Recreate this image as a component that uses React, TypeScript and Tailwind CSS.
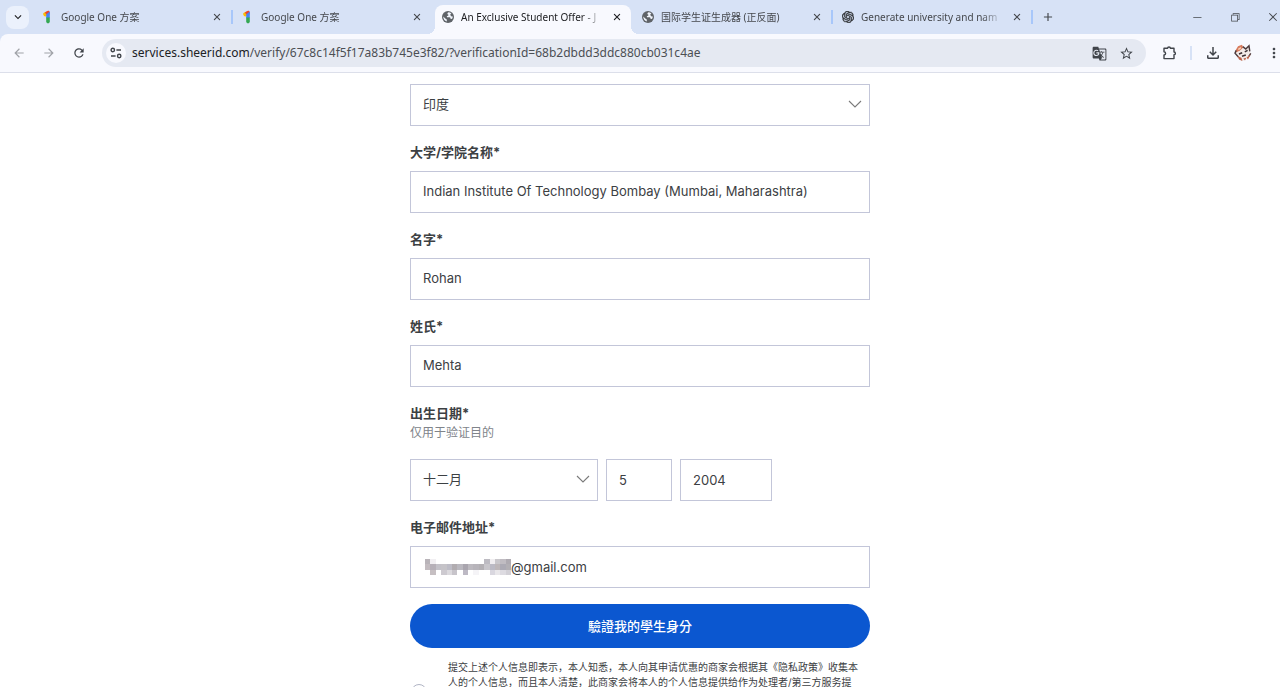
import React from "react"
import { IoClose } from "react-icons/io5"
import { MdArrowBack, MdArrowForward, MdRefresh, MdKeyboardArrowDown, MdStarBorder, MdMoreVert, MdAdd, MdOutlineFileDownload, MdGTranslate } from "react-icons/md"
import { SiOpenai } from "react-icons/si"
import { VscChromeMinimize, VscChromeRestore, VscChromeClose } from "react-icons/vsc"

interface Tab {
    title: string
    icon: "one" | "globe" | "openai"
    active?: boolean
    divider?: boolean
}

const TABS: Array<Tab> = [
    { title: "Google One 方案", icon: "one", divider: true },
    { title: "Google One 方案", icon: "one" },
    { title: "An Exclusive Student Offer - J", icon: "globe", active: true },
    { title: "国际学生证生成器 (正反面)", icon: "globe", divider: true },
    { title: "Generate university and nam", icon: "openai", divider: true },
]

// blurred part of the address, one row of colours per line of blocks
const MOSAIC = [
    ["#b9b4b9", "#f1eff2", "", "", "", "", "", "", "", "", "", "#bdbbc2", "#f0eef0", "#c9c7cb", "#c0bcc2", "#aeaab1"],
    ["#c3bcc0", "#b6b0b8", "#c3c1c8", "#c5c3c8", "#bdbcc6", "#b1acb0", "#bab8bf", "#a9a5ae", "#bcb9bf", "#b7b4ba", "#b3b0b4", "#c8c6cb", "#bbbac4", "#bdb7b9", "#acaab4", "#b2afb4"],
    ["", "#c6bfc2", "", "#cdcad0", "#dcdade", "#c7c4ca", "", "#bdb9c4", "", "#f5f4f7", "", "", "#d9d7df", "#e9e7ea", "#dddbe1", "#d2d0d6"],
]

function GoogleOneIcon() {
    return (
        <svg viewBox="0 0 14 14" className="size-3.5 shrink-0">
            <path d="M2.2 4.4Q1.8 3.2 3.2 2.6L7 1V5.2L4.4 6.4Q2.8 6.2 2.2 4.4Z" fill="#fbbc04" />
            <path d="M4 2.2 7 .8Q8.6.4 8.6 2V4.6L5.2 4.4Z" fill="#ea4335" />
            <path d="M5.2 4.4 8.8 1.6V8H5.2Z" fill="#4285f4" />
            <path d="M5.2 7.4h3.6v4.2a1.8 1.8 0 0 1-3.6 0Z" fill="#34a853" />
        </svg>
    )
}

function GlobeIcon() {
    return (
        <svg viewBox="0 0 14 14" className="size-3.5 shrink-0">
            <circle cx="7" cy="7" r="6" fill="#5f6368" />
            <path d="M7.4 2.2Q5.8 3 6.6 4.2 7.8 4.4 7.4 5.4L5.8 6.2 6 7.2H8.6Q9.8 7.6 9.4 8.8L11 9Q11.8 7.8 11.8 6.6L10 6.2 9.2 4.4 10.4 3.4Q9 2.2 7.4 2.2Z" fill="#f1f5fc" />
            <path d="M2.2 6.6 4.6 8.8 5.8 9.4V11.6Q2.4 10.6 2.2 6.6Z" fill="#f1f5fc" />
        </svg>
    )
}

function TabIcon({ icon }: { icon: Tab["icon"] }) {
    if (icon === "one") return <GoogleOneIcon />
    if (icon === "openai") return <SiOpenai size={14} strokeWidth={0.8} stroke="currentColor" className="shrink-0 p-px text-[#303236]" />
    return <GlobeIcon />
}

function PuzzleIcon() {
    return (
        <svg viewBox="0 0 16 16" className="size-4" fill="none" stroke="currentColor" strokeWidth="1.4" strokeLinejoin="round">
            <path d="M2 3.2H5.6Q5.6 2 7 2T8.4 3.2H12V7Q13.4 7 13.4 8.4T12 9.8V13.6H2V10Q3.6 9.8 3.6 8.4T2 6.8Z" />
        </svg>
    )
}

function Avatar() {
    return (
        <svg viewBox="0 0 18 18" className="size-[18px]">
            <path d="M2 5 6 1.2 10 4 14.6 1.6 15.6 7 17.2 9.4 14.4 14.6 8.6 17 4 14 .8 9.4Z" fill="#f3ebe8" />
            <path d="M1.8 6 4 2.2 8 .8 9.2 3.4 6 6.6 2 8.6Z" fill="#d77a5c" />
            <path d="M4 4.8 6.8 3 7 4.6 4.6 6.2Z" fill="#f7d6be" />
            <path d="M8.8 2.6 11.8 5 15 1.8 15.8 7.4M2.2 6.4 1 9.2 4.4 13M16.8 9.4 14.8 12.4" fill="none" stroke="#4a3a3c" strokeWidth="1.4" />
            <path d="M5 10 8.2 8.8M10.8 7.8 13.6 6.4M8 12.2 11.8 11" fill="none" stroke="#3b3034" strokeWidth="1.5" />
            <path d="M3.4 12 7.4 13.8 8.4 17 5 15.4ZM12.6 13.4 16.6 10.6 14 15.4ZM9.4 14.4 12.2 13.8 11 16.6Z" fill="#b9614a" />
        </svg>
    )
}

function Chevron() {
    return (
        <svg viewBox="0 0 14 8" className="pointer-events-none absolute top-4 right-2 h-2 w-3.5" fill="none" stroke="#7a7a7a" strokeWidth="1.1">
            <path d="M1 1 7 7 13 1" />
        </svg>
    )
}

function Field({ id, label, value }: { id: string; label: string; value: string }) {
    return (
        <div>
            <label htmlFor={id} className="mb-[9px] block h-5 text-[13px] leading-5 font-bold">{label}</label>
            <input id={id} defaultValue={value} className="h-[42px] w-full border border-[#c3c6d9] px-3 pb-0.5 text-[13px] outline-none" />
        </div>
    )
}

function TabStrip() {
    return (
        <div className="flex h-[34px] items-center bg-[#d7e2f6] pl-1.5 text-[10px] text-[#45484d]">
            <button aria-label="Search tabs" className="mr-1.5 flex size-[23px] items-center justify-center rounded-lg bg-[#ebf1fc] text-[#202124]">
                <MdKeyboardArrowDown size={14} />
            </button>
            <div className="flex h-full gap-1">
                {TABS.map((tab, idx) => (
                    <div
                        key={idx}
                        className={
                            tab.active
                                ? "relative mt-[5px] flex w-[196px] items-center rounded-t-lg bg-[#f8f9fe] pr-2 pb-[5px] pl-1.5 text-[#202124]"
                                : "relative flex w-[196px] items-center pr-2 pl-1.5"
                        }
                    >
                        {tab.active && (
                            <>
                                <span className="absolute bottom-0 -left-2 size-2 bg-[radial-gradient(circle_at_top_left,transparent_8px,#f8f9fe_8px)]" />
                                <span className="absolute -right-2 bottom-0 size-2 bg-[radial-gradient(circle_at_top_right,transparent_8px,#f8f9fe_8px)]" />
                            </>
                        )}
                        <TabIcon icon={tab.icon} />
                        <span className="ml-1.5 w-[142px] mask-r-from-85% whitespace-nowrap">{tab.title}</span>
                        <button aria-label="Close tab" className="ml-auto"><IoClose size={12} /></button>
                        {tab.divider && <span className="absolute top-2.5 -right-0.5 h-3.5 w-0.5 bg-[#a8c7fa]" />}
                    </div>
                ))}
            </div>
            <button aria-label="New tab" className="ml-2.5"><MdAdd size={14} /></button>
            <div className="ml-auto flex shrink-0 items-center gap-[26px] pr-px">
                <button aria-label="Minimize"><VscChromeMinimize size={12} /></button>
                <button aria-label="Restore"><VscChromeRestore size={12} /></button>
                <button aria-label="Close"><VscChromeClose size={12} /></button>
            </div>
        </div>
    )
}

function Toolbar() {
    return (
        <div className="flex h-[39px] items-center rounded-tl-lg border-b border-[#dcdfea] bg-[#f8f9fe] pl-3 text-[#40444a]">
            <button aria-label="Back" className="mr-4 text-[#a0a3a8]"><MdArrowBack size={14} /></button>
            <button aria-label="Forward" className="mr-4 text-[#a0a3a8]"><MdArrowForward size={14} /></button>
            <button aria-label="Reload" className="mr-4"><MdRefresh size={14} /></button>
            <div className="flex h-7 flex-1 items-center rounded-full bg-[#e5e9f2] pr-3 pl-1">
                <button aria-label="Site information" className="mr-1.5 flex size-5 items-center justify-center rounded-full bg-[#f8f9fe]">
                    <svg viewBox="0 0 12 12" className="size-3" fill="none" stroke="currentColor" strokeWidth="1.4">
                        <circle cx="2.8" cy="3" r="1.7" />
                        <path d="M6.4 3H11M1 9h4.6" />
                        <circle cx="9.2" cy="9" r="1.7" />
                    </svg>
                </button>
                <span className="flex-1 text-xs text-[#4c4f54]">
                    <span className="text-[#202124]">services.sheerid.com</span>/verify/67c8c14f5f17a83b745e3f82/?verificationId=68b2dbdd3ddc880cb031c4ae
                </span>
                <button aria-label="Translate" className="mr-3"><MdGTranslate size={15} /></button>
                <button aria-label="Bookmark"><MdStarBorder size={15} /></button>
            </div>
            <button aria-label="Extensions" className="ml-4"><PuzzleIcon /></button>
            <span className="mx-3 h-3.5 w-0.5 bg-[#d7e2f6]" />
            <button aria-label="Downloads"><MdOutlineFileDownload size={18} /></button>
            <button aria-label="Profile" className="ml-3"><Avatar /></button>
            <button aria-label="Menu" className="ml-3.5 -mr-0.5"><MdMoreVert size={16} /></button>
        </div>
    )
}

export default function App() {
    return (
        <div className="flex h-screen flex-col overflow-hidden bg-white font-['Noto_Sans','Noto_Sans_CJK_SC',sans-serif]">
            <header className="bg-[#d7e2f6]">
                <TabStrip />
                <Toolbar />
            </header>
            <main className="min-h-0 flex-1 overflow-hidden pt-[11px] font-[Inter,'Noto_Sans_CJK_SC',sans-serif] text-[#3c4043]">
                <form className="mx-auto flex w-full max-w-[460px] flex-col gap-4">
                    <div className="relative">
                        <select aria-label="国家/地区" className="h-[42px] w-full appearance-none border border-[#c3c6d9] px-3 text-[13px] outline-none">
                            <option>印度</option>
                        </select>
                        <Chevron />
                    </div>
                    <Field id="school" label="大学/学院名称*" value="Indian Institute Of Technology Bombay (Mumbai, Maharashtra)" />
                    <Field id="first" label="名字*" value="Rohan" />
                    <Field id="last" label="姓氏*" value="Mehta" />
                    <fieldset>
                        <legend className="h-5 text-[13px] leading-5 font-bold">出生日期*</legend>
                        <p className="mb-4 text-xs leading-5 text-[#80848a]">仅用于验证目的</p>
                        <div className="flex gap-2">
                            <div className="relative">
                                <select aria-label="月" className="h-[42px] w-[188px] appearance-none border border-[#c3c6d9] px-3 text-[13px] outline-none">
                                    <option>十二月</option>
                                </select>
                                <Chevron />
                            </div>
                            <input aria-label="日" defaultValue="5" className="h-[42px] w-[66px] border border-[#c3c6d9] px-3 text-[13px] outline-none" />
                            <input aria-label="年" defaultValue="2004" className="h-[42px] w-[92px] border border-[#c3c6d9] px-3 text-[13px] outline-none" />
                        </div>
                    </fieldset>
                    <div>
                        <label htmlFor="email" className="mb-[9px] block h-5 text-[13px] leading-5 font-bold">电子邮件地址*</label>
                        <div className="flex h-[42px] items-center border border-[#c3c6d9] pl-3.5">
                            <svg viewBox="0 0 16 3" preserveAspectRatio="none" shapeRendering="crispEdges" className="h-4 w-[86px]">
                                {MOSAIC.map((row, y) => row.map((fill, x) => fill && <rect key={`${x}-${y}`} x={x} y={y} width="1" height="1" fill={fill} />))}
                            </svg>
                            <input id="email" defaultValue="@gmail.com" className="h-full min-w-0 flex-1 text-[13px] outline-none" />
                        </div>
                    </div>
                    <button type="button" className="h-11 w-full rounded-full bg-[#0b57d0] font-['Noto_Sans_CJK_TC',sans-serif] text-[13px] font-medium text-white">驗證我的學生身分</button>
                    <div className="-mt-1 flex items-start pr-1.5">
                        <input id="consent" type="checkbox" className="mt-6 mr-[21px] ml-px size-4 shrink-0 appearance-none rounded-full border border-[#b0b4c4]" />
                        <label htmlFor="consent" className="text-[10px] leading-[15px]">
                            提交上述个人信息即表示，本人知悉，本人向其申请优惠的商家会根据其《隐私政策》收集本人的个人信息，而且本人清楚，此商家会将本人的个人信息提供给作为处理者/第三方服务提
                        </label>
                    </div>
                </form>
            </main>
        </div>
    )
}
